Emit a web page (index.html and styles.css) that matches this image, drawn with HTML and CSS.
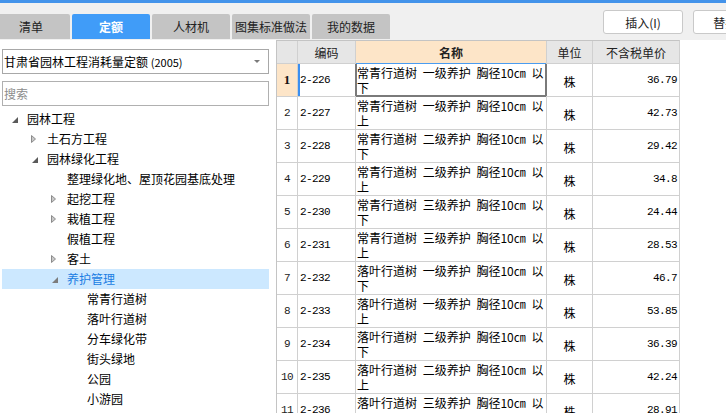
FILE: index.html
```html
<!DOCTYPE html>
<html lang="zh-CN">
<head>
<meta charset="utf-8">
<title>定额</title>
<link rel="stylesheet" href="styles.css">
</head>
<body>
<div class="app">
  <div class="accent"></div>
  <header class="toolbar">
    <nav class="tabs">
      <div class="tab">清单</div>
      <div class="tab active">定额</div>
      <div class="tab">人材机</div>
      <div class="tab">图集标准做法</div>
      <div class="tab">我的数据</div>
    </nav>
    <div class="actions">
      <button class="btn">插入(I)</button>
      <button class="btn">替换(R)</button>
    </div>
  </header>
  <div class="main">
    <aside class="side">
      <div class="select">
        <span class="select-text">甘肃省园林工程消耗量定额 <small>(2005)</small></span>
        <svg class="caret" width="6" height="4" viewBox="0 0 6 4"><polygon points="0,0 6,0 3,3" fill="#7a7a7a"/></svg>
      </div>
      <input class="search" type="text" placeholder="搜索">
      <ul class="tree">
        <li class="node l0"><span class="tw"><svg class="exp" width="6" height="6" viewBox="0 0 6 6"><polygon points="6,0 6,6 0,6" fill="#5a5a5a"/></svg></span><span>园林工程</span></li>
        <li class="node l1"><span class="tw"><svg class="col" width="5" height="8" viewBox="0 0 5 8"><polygon points="0.5,0.5 4.5,4 0.5,7.5" fill="#c8c8c8" stroke="#8c8c8c" stroke-width="1"/></svg></span><span>土石方工程</span></li>
        <li class="node l1"><span class="tw"><svg class="exp" width="6" height="6" viewBox="0 0 6 6"><polygon points="6,0 6,6 0,6" fill="#5a5a5a"/></svg></span><span>园林绿化工程</span></li>
        <li class="node l2"><span class="tw"></span><span>整理绿化地、屋顶花园基底处理</span></li>
        <li class="node l2"><span class="tw"><svg class="col" width="5" height="8" viewBox="0 0 5 8"><polygon points="0.5,0.5 4.5,4 0.5,7.5" fill="#c8c8c8" stroke="#8c8c8c" stroke-width="1"/></svg></span><span>起挖工程</span></li>
        <li class="node l2"><span class="tw"><svg class="col" width="5" height="8" viewBox="0 0 5 8"><polygon points="0.5,0.5 4.5,4 0.5,7.5" fill="#c8c8c8" stroke="#8c8c8c" stroke-width="1"/></svg></span><span>栽植工程</span></li>
        <li class="node l2"><span class="tw"></span><span>假植工程</span></li>
        <li class="node l2"><span class="tw"><svg class="col" width="5" height="8" viewBox="0 0 5 8"><polygon points="0.5,0.5 4.5,4 0.5,7.5" fill="#c8c8c8" stroke="#8c8c8c" stroke-width="1"/></svg></span><span>客土</span></li>
        <li class="node l2 selected"><span class="tw"><svg class="exp" width="6" height="6" viewBox="0 0 6 6"><polygon points="6,0 6,6 0,6" fill="#7c7c7c"/></svg></span><span>养护管理</span></li>
        <li class="node l3"><span class="tw"></span><span>常青行道树</span></li>
        <li class="node l3"><span class="tw"></span><span>落叶行道树</span></li>
        <li class="node l3"><span class="tw"></span><span>分车绿化带</span></li>
        <li class="node l3"><span class="tw"></span><span>街头绿地</span></li>
        <li class="node l3"><span class="tw"></span><span>公园</span></li>
        <li class="node l3"><span class="tw"></span><span>小游园</span></li>
      </ul>
    </aside>
    <section class="grid">
      <div class="row head">
        <div class="cell num"></div>
        <div class="cell">编码</div>
        <div class="cell hl bold">名称</div>
        <div class="cell">单位</div>
        <div class="cell">不含税单价</div>
      </div>
      <div class="row current">
        <div class="cell num hl bold">1</div>
        <div class="cell code">2-226</div>
        <div class="cell name focus">常青行道树 一级养护 胸径10㎝ 以下</div>
        <div class="cell unit">株</div>
        <div class="cell price">36.79</div>
      </div>
      <div class="row">
        <div class="cell num">2</div>
        <div class="cell code">2-227</div>
        <div class="cell name">常青行道树 一级养护 胸径10㎝ 以上</div>
        <div class="cell unit">株</div>
        <div class="cell price">42.73</div>
      </div>
      <div class="row">
        <div class="cell num">3</div>
        <div class="cell code">2-228</div>
        <div class="cell name">常青行道树 二级养护 胸径10㎝ 以下</div>
        <div class="cell unit">株</div>
        <div class="cell price">29.42</div>
      </div>
      <div class="row">
        <div class="cell num">4</div>
        <div class="cell code">2-229</div>
        <div class="cell name">常青行道树 二级养护 胸径10㎝ 以上</div>
        <div class="cell unit">株</div>
        <div class="cell price">34.8</div>
      </div>
      <div class="row">
        <div class="cell num">5</div>
        <div class="cell code">2-230</div>
        <div class="cell name">常青行道树 三级养护 胸径10㎝ 以下</div>
        <div class="cell unit">株</div>
        <div class="cell price">24.44</div>
      </div>
      <div class="row">
        <div class="cell num">6</div>
        <div class="cell code">2-231</div>
        <div class="cell name">常青行道树 三级养护 胸径10㎝ 以上</div>
        <div class="cell unit">株</div>
        <div class="cell price">28.53</div>
      </div>
      <div class="row">
        <div class="cell num">7</div>
        <div class="cell code">2-232</div>
        <div class="cell name">落叶行道树 一级养护 胸径10㎝ 以下</div>
        <div class="cell unit">株</div>
        <div class="cell price">46.7</div>
      </div>
      <div class="row">
        <div class="cell num">8</div>
        <div class="cell code">2-233</div>
        <div class="cell name">落叶行道树 一级养护 胸径10㎝ 以上</div>
        <div class="cell unit">株</div>
        <div class="cell price">53.85</div>
      </div>
      <div class="row">
        <div class="cell num">9</div>
        <div class="cell code">2-234</div>
        <div class="cell name">落叶行道树 二级养护 胸径10㎝ 以下</div>
        <div class="cell unit">株</div>
        <div class="cell price">36.39</div>
      </div>
      <div class="row">
        <div class="cell num">10</div>
        <div class="cell code">2-235</div>
        <div class="cell name">落叶行道树 二级养护 胸径10㎝ 以上</div>
        <div class="cell unit">株</div>
        <div class="cell price">42.24</div>
      </div>
      <div class="row">
        <div class="cell num">11</div>
        <div class="cell code">2-236</div>
        <div class="cell name">落叶行道树 三级养护 胸径10㎝ 以下</div>
        <div class="cell unit">株</div>
        <div class="cell price">28.91</div>
      </div>
    </section>
  </div>
</div>
</body>
</html>
```
FILE: styles.css
```css
html, body {
  margin: 0;
  padding: 0;
  width: 726px;
  height: 413px;
  overflow: hidden;
  background: #ffffff;
}

body {
  font-family: "Noto Sans CJK SC", "Liberation Sans", sans-serif;
  font-size: 12px;
  color: #000;
}

.app {
  width: 726px;
  height: 413px;
  overflow: hidden;
}

.accent {
  height: 3px;
  background: #4393ea;
}

.toolbar {
  display: flex;
  align-items: flex-start;
  height: 37px;
  background: #f0f0f0;
  overflow: hidden;
}

.tabs {
  display: flex;
  gap: 2px;
  margin-top: 11px;
  margin-left: -8px;
  flex-shrink: 0;
}

.tab {
  width: 78px;
  height: 25px;
  line-height: 25px;
  text-align: center;
  background: #c4c4c4;
  color: #222;
  border-radius: 2px 2px 0 0;
  font-size: 12px;
}

.tab.active {
  background: #409cf8;
  color: #fff;
  font-weight: bold;
}

.actions {
  display: flex;
  gap: 10px;
  margin-top: 7px;
  margin-left: 213px;
  flex-shrink: 0;
}

.btn {
  width: 80px;
  height: 24px;
  padding: 0;
  background: #fff;
  border: 1px solid #c9c9c9;
  border-radius: 3px;
  font-family: inherit;
  font-size: 12px;
  color: #222;
}

.main {
  display: flex;
  gap: 5px;
  align-items: flex-start;
}

.side {
  width: 271px;
  flex-shrink: 0;
  box-sizing: border-box;
  padding: 0 2px;
}

.select {
  box-sizing: border-box;
  height: 25px;
  margin-top: 9px;
  border: 1px solid #a8a8a8;
  display: flex;
  align-items: center;
  justify-content: space-between;
  padding: 0 8px 0 1px;
}

.select-text {
  white-space: nowrap;
}

.select small {
  font-size: 11px;
}

.search {
  display: block;
  box-sizing: border-box;
  width: 100%;
  height: 25px;
  margin: 7px 0 0;
  border: 1px solid #b0b0b0;
  padding: 0 1px;
  font-family: inherit;
  font-size: 12px;
  outline: none;
}

.search::placeholder {
  color: #8c8c8c;
}

.tree {
  list-style: none;
  margin: 3px 0 0;
  padding: 0;
}

.node {
  display: flex;
  align-items: center;
  height: 20px;
  line-height: 20px;
  white-space: nowrap;
}

.node.l0 { padding-left: 8px; }
.node.l1 { padding-left: 28px; }
.node.l2 { padding-left: 48px; }
.node.l3 { padding-left: 68px; }

.tw {
  width: 17px;
  height: 20px;
  display: flex;
  align-items: center;
  flex-shrink: 0;
}

.tw .col {
  margin-left: 1px;
}

.tw .exp {
  margin-left: 2px;
  margin-top: 2px;
}

.node.selected {
  background: #cce8ff;
  color: #1a7de3;
}

.grid {
  width: 402px;
  flex-shrink: 0;
  display: flex;
  flex-direction: column;
  gap: 1px;
  background: #d0d0d0;
  border: 1px solid #c4c4c4;
  border-right-color: #d0d0d0;
}

.row {
  display: grid;
  grid-template-columns: 20px 57px 190px 45px 86px;
  gap: 1px;
  height: 32px;
}

.row.head {
  height: 22px;
}

.cell {
  background: #fff;
  display: flex;
  align-items: center;
  overflow: hidden;
}

.head .cell {
  background: #e6e6e6;
  justify-content: center;
  color: #222;
}

.head .cell.hl,
.cell.hl {
  background: #fde5c8;
}

.bold {
  font-weight: bold;
}

.num {
  justify-content: center;
  font-family: "Liberation Mono", monospace;
  font-size: 11px;
  letter-spacing: -0.6px;
  color: #222;
}

.num.bold {
  font-family: "Liberation Serif", serif;
  font-size: 13px;
  letter-spacing: 0;
  color: #111;
}

.code {
  padding-left: 2px;
  font-family: "Liberation Mono", monospace;
  font-size: 11px;
  letter-spacing: -0.6px;
}

.current .code {
  box-shadow: inset 2px 0 0 #3b8ff0;
}

.name {
  align-items: flex-start;
  padding: 1px 0 0 1px;
  line-height: 15px;
  word-spacing: 3px;
}

.name.focus {
  position: relative;
  z-index: 1;
  box-shadow: 0 -1px 0 0 #4a9cf0, inset 1px 0 0 #7a7a7a, inset -1px 0 0 #7a7a7a, inset 0 -1px 0 #7a7a7a, -1px 0 0 0 #7a7a7a, 1px 0 0 0 #7a7a7a, 0 1px 0 0 #7a7a7a;
}

.unit {
  justify-content: center;
  padding-top: 2px;
}

.price {
  justify-content: flex-end;
  padding-right: 2px;
  font-family: "Liberation Mono", monospace;
  font-size: 11px;
  letter-spacing: -0.6px;
}
```
